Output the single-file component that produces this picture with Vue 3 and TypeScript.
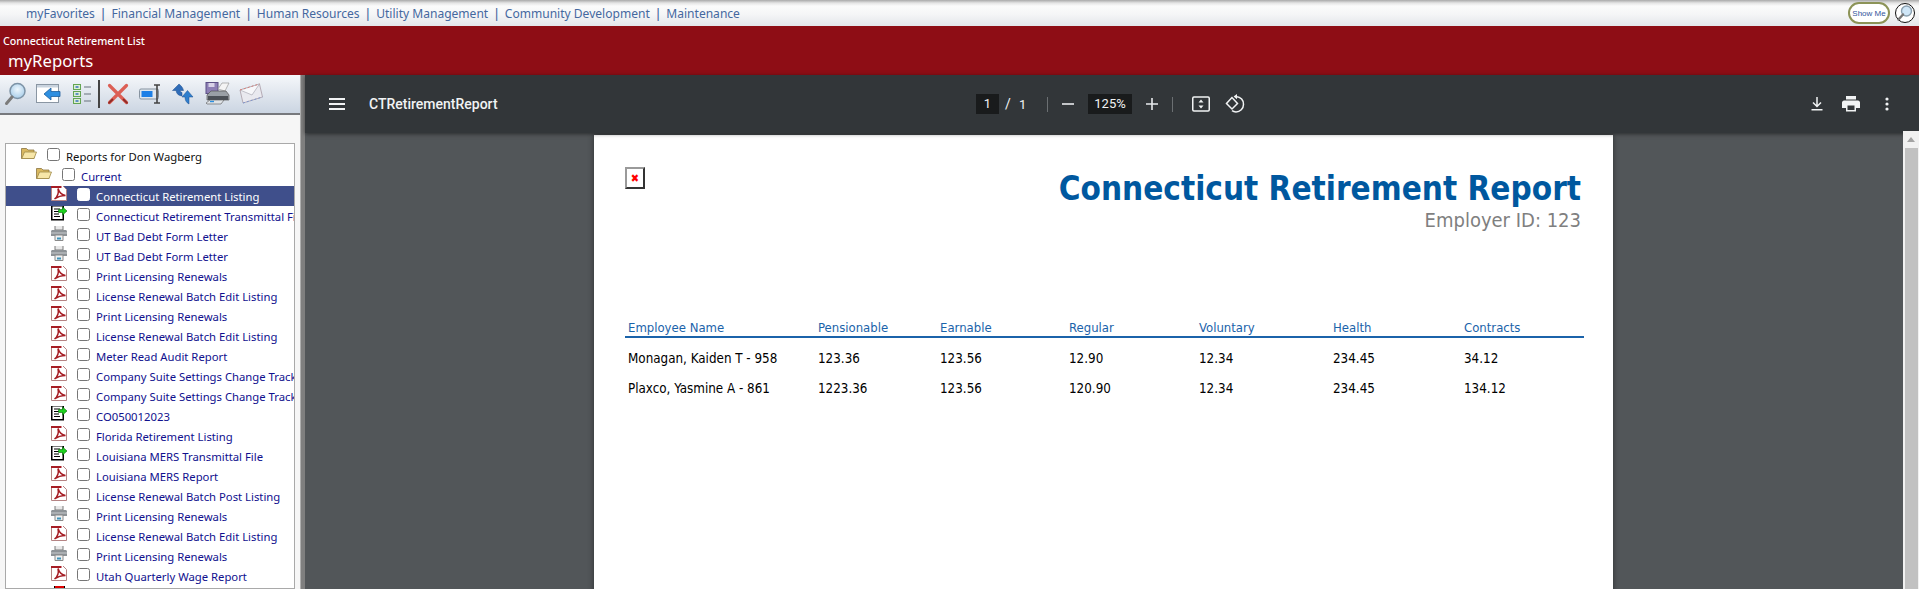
<script setup lang="ts">
type Kind = 'pdf' | 'file' | 'print'
interface Row { kind: Kind; label: string; active?: boolean }

const navItems: string[] = ['myFavorites', 'Financial Management', 'Human Resources', 'Utility Management', 'Community Development', 'Maintenance']

const rows: Row[] = [
  { kind: 'pdf', label: 'Connecticut Retirement Listing', active: true },
  { kind: 'file', label: 'Connecticut Retirement Transmittal File' },
  { kind: 'print', label: 'UT Bad Debt Form Letter' },
  { kind: 'print', label: 'UT Bad Debt Form Letter' },
  { kind: 'pdf', label: 'Print Licensing Renewals' },
  { kind: 'pdf', label: 'License Renewal Batch Edit Listing' },
  { kind: 'pdf', label: 'Print Licensing Renewals' },
  { kind: 'pdf', label: 'License Renewal Batch Edit Listing' },
  { kind: 'pdf', label: 'Meter Read Audit Report' },
  { kind: 'pdf', label: 'Company Suite Settings Change Tracking' },
  { kind: 'pdf', label: 'Company Suite Settings Change Tracking' },
  { kind: 'file', label: 'CO050012023' },
  { kind: 'pdf', label: 'Florida Retirement Listing' },
  { kind: 'file', label: 'Louisiana MERS Transmittal File' },
  { kind: 'pdf', label: 'Louisiana MERS Report' },
  { kind: 'pdf', label: 'License Renewal Batch Post Listing' },
  { kind: 'print', label: 'Print Licensing Renewals' },
  { kind: 'pdf', label: 'License Renewal Batch Edit Listing' },
  { kind: 'print', label: 'Print Licensing Renewals' },
  { kind: 'pdf', label: 'Utah Quarterly Wage Report' },
]

const headers: string[] = ['Employee Name', 'Pensionable', 'Earnable', 'Regular', 'Voluntary', 'Health', 'Contracts']
const records: string[][] = [
  ['Monagan, Kaiden T - 958', '123.36', '123.56', '12.90', '12.34', '234.45', '34.12'],
  ['Plaxco, Yasmine A - 861', '1223.36', '123.56', '120.90', '12.34', '234.45', '134.12'],
]
</script>

<template>
  <div class="app">
    <nav class="topnav">
      <template v-for="(item, i) in navItems" :key="item">
        <span v-if="i > 0" class="sep">|</span>
        <a class="navlink">{{ item }}</a>
      </template>
      <span class="showme">Show Me</span>
      <span class="round-search">
        <svg width="18" height="18" viewBox="0 0 18 18">
          <circle cx="10.5" cy="7" r="5" fill="#cfe6f7" stroke="#8aa0b0" stroke-width="1.4" />
          <path d="M7 10.5L2.5 15.5" stroke="#777" stroke-width="2.4" stroke-linecap="round" />
        </svg>
      </span>
    </nav>

    <header class="banner">
      <div class="banner-sub">Connecticut Retirement List</div>
      <div class="banner-title">myReports</div>
    </header>

    <main class="main">
      <aside class="left">
        <div class="tools">
          <svg class="t" width="22" height="24" viewBox="0 0 22 24">
            <defs>
              <radialGradient id="lens" cx="0.5" cy="0.4" r="0.7"><stop offset="0" stop-color="#eef7fd" /><stop offset="1" stop-color="#9cc6e6" /></radialGradient>
            </defs>
            <circle cx="13.5" cy="9" r="7.5" fill="url(#lens)" stroke="#7d93a6" stroke-width="1.5" />
            <path d="M8 15L2.5 21.5" stroke="#7b7b7b" stroke-width="3" stroke-linecap="round" />
          </svg>
          <svg class="t t2" width="25" height="22" viewBox="0 0 25 22">
            <rect x="0.5" y="1.5" width="22" height="18" fill="#fff" stroke="#8a96a3" />
            <rect x="1" y="2" width="21" height="2.5" fill="#c9d3de" />
            <path d="M8 11L15 5V8.5H24V13.5H15V17Z" fill="#2f8fe0" stroke="#1c5e9e" stroke-width="0.8" />
          </svg>
          <svg class="t t3" width="19" height="22" viewBox="0 0 19 22">
            <g fill="#dcefd4" stroke="#63a552">
              <rect x="0.5" y="1.5" width="7" height="5" /><rect x="0.5" y="8.5" width="7" height="5" /><rect x="0.5" y="15.5" width="7" height="5" />
            </g>
            <g fill="#5f8fc5"><rect x="2.5" y="3" width="3" height="2" /><rect x="2.5" y="10" width="3" height="2" /><rect x="2.5" y="17" width="3" height="2" /></g>
            <path d="M11 4H18M11 11H18M11 18H18" stroke="#68727c" stroke-width="1.2" />
          </svg>
          <span class="tsep"></span>
          <svg class="t t4" width="22" height="22" viewBox="0 0 22 22">
            <path d="M2.5 2.5L19.5 19.5M19.5 2.5L2.5 19.5" stroke="#dc5f55" stroke-width="3.2" stroke-linecap="round" />
            <path d="M2 19.8L5.5 16.5M20 19.8L16.5 16.5" stroke="#8e2a25" stroke-width="1.8" stroke-linecap="round" />
          </svg>
          <svg class="t t5" width="23" height="22" viewBox="0 0 23 22">
            <rect x="0.5" y="6" width="19" height="10" rx="1.5" fill="#dfe6ee" stroke="#8693a0" />
            <rect x="2.5" y="8" width="11" height="6" fill="#1d7fe6" />
            <path d="M15 2H21M18 2V20M15 20H21" stroke="#444" stroke-width="1.6" fill="none" />
          </svg>
          <svg class="t t6" width="23" height="22" viewBox="0 0 23 22">
            <path d="M7 1L0.5 7.5H4C4.5 11 6.5 12.5 10 13V9.5C8.5 9 8 8 8 7.5H11.5C11 5 9.5 3 7 1Z" fill="#2f6cb8" stroke="#1f4f8c" stroke-width="0.5" />
            <path d="M17 21V14H21L15.5 7.5L10 14H13C13 17 14 19.5 17 21Z" fill="#2f7fce" stroke="#1f4f8c" stroke-width="0.5" />
          </svg>
          <svg class="t t7" width="25" height="24" viewBox="0 0 25 24">
            <rect x="1" y="0.5" width="12" height="11" fill="#8d7fb5" stroke="#5b4f85" />
            <rect x="3.5" y="1" width="6" height="4" fill="#d8d2e8" />
            <path d="M13 7L17 1H24L20 9Z" fill="#f4f4f4" stroke="#999" stroke-width="0.7" />
            <path d="M2 13L6 9H21L24 13V18H2Z" fill="#9aa0a6" stroke="#555" stroke-width="0.7" />
            <path d="M3 14H23V18H3Z" fill="#4c5157" />
            <path d="M1 21L5 18H19L16 22H2Z" fill="#dfe3e7" stroke="#555" stroke-width="0.6" />
            <path d="M5 19.5H9" stroke="#2b8fe0" stroke-width="1.4" />
          </svg>
          <svg class="t t8" width="24" height="22" viewBox="0 0 24 22">
            <path d="M1 7L20.5 1L23.5 14L4 20Z" fill="#e9e9ef" stroke="#b5abb4" stroke-width="1" />
            <path d="M1 7L13 12L20.5 1Z" fill="#f7f7fa" stroke="#b4b4bc" stroke-width="0.8" />
            <path d="M1 7L20.5 1" stroke="#d6807a" stroke-width="1" stroke-dasharray="2 2" />
            <path d="M4 20L23.5 14" stroke="#7d95cc" stroke-width="1" stroke-dasharray="2 2" />
          </svg>
        </div>
        <div class="tree-wrap">
          <div class="tree">
            <div class="row lvl0">
              <svg class="ico" width="16" height="14" viewBox="0 0 16 14"><use href="#folder" /></svg>
              <span class="cb"></span>
              <span class="lbl root">Reports for Don Wagberg</span>
            </div>
            <div class="row lvl1">
              <svg class="ico" width="16" height="14" viewBox="0 0 16 14"><use href="#folder" /></svg>
              <span class="cb"></span>
              <span class="lbl">Current</span>
            </div>
            <div v-for="(r, i) in rows" :key="i" class="row lvl2" :class="{ active: r.active }">
              <svg class="ico" width="16" height="16" viewBox="0 0 16 16"><use :href="'#' + r.kind" /></svg>
              <span class="cb"></span>
              <span class="lbl">{{ r.label }}</span>
            </div>
            <div class="row lvl2 partial">
              <span class="redtop"></span>
              <span class="cb"></span>
            </div>
          </div>
        </div>
      </aside>
      <div class="splitter"></div>

      <section class="viewer">
        <div class="pdfbar">
          <div class="pb-left">
            <svg width="16" height="12" viewBox="0 0 16 12"><path d="M0 1H16M0 6H16M0 11H16" stroke="#f1f3f4" stroke-width="2" /></svg>
            <span class="docname">CTRetirementReport</span>
          </div>
          <div class="pb-mid">
            <span class="pagebox">1</span>
            <span class="slash">/</span>
            <span class="pagecount">1</span>
            <span class="vsep vsep1"></span>
            <svg class="minus" width="12" height="12" viewBox="0 0 12 12"><path d="M0 6H12" stroke="#e8eaed" stroke-width="1.6" /></svg>
            <span class="zoombox">125%</span>
            <svg class="plus" width="12" height="12" viewBox="0 0 12 12"><path d="M0 6H12M6 0V12" stroke="#e8eaed" stroke-width="1.6" /></svg>
            <span class="vsep vsep2"></span>
            <svg class="fit" width="18" height="16" viewBox="0 0 18 16">
              <rect x="0.75" y="1" width="16.5" height="14" rx="1.2" fill="none" stroke="#f1f3f4" stroke-width="1.5" />
              <path d="M9 3.5L11.5 6.5H6.5ZM9 12.5L6.5 9.5H11.5Z" fill="#f1f3f4" />
            </svg>
            <svg class="rotate" width="20" height="20" viewBox="0 0 20 20">
              <path d="M7 3.5L1.5 9.5L7 15L12.5 9.5Z" fill="none" stroke="#f1f3f4" stroke-width="1.5" />
              <path d="M11 2.5C15.5 3 18.5 6 18.5 10.5C18.5 14.5 15 18 11 18C9.5 18 8 17.5 7 16.7" fill="none" stroke="#f1f3f4" stroke-width="1.5" />
              <path d="M12 0L8.6 2.6L12 5.2Z" fill="#f1f3f4" />
            </svg>
          </div>
          <div class="pb-right">
            <svg width="14" height="14" viewBox="0 0 14 14"><path d="M7 0V9M3 5.5L7 9.5L11 5.5M1.5 12.8H12.5" fill="none" stroke="#f1f3f4" stroke-width="1.5" /></svg>
            <svg class="pr" width="18" height="16" viewBox="0 0 18 16"><path d="M4 0H14V3.5H4ZM2 4.5H16C17 4.5 18 5.5 18 6.5V12H14V15.5H4V12H0V6.5C0 5.5 1 4.5 2 4.5ZM5.5 9.5V14H12.5V9.5Z" fill="#f1f3f4" fill-rule="evenodd" /></svg>
            <svg class="dots" width="4" height="14" viewBox="0 0 4 14"><circle cx="2" cy="2" r="1.6" fill="#f1f3f4" /><circle cx="2" cy="7" r="1.6" fill="#f1f3f4" /><circle cx="2" cy="12" r="1.6" fill="#f1f3f4" /></svg>
          </div>
        </div>
        <div class="pdfbody">
          <div class="stage">
            <article class="page">
              <div class="broken"><span class="xmark">✖</span></div>
              <div class="titles">
                <h1>Connecticut Retirement Report</h1>
                <div class="employer">Employer ID: 123</div>
              </div>
              <div class="table">
                <div class="thead">
                  <span v-for="h in headers" :key="h">{{ h }}</span>
                </div>
                <div v-for="rec in records" :key="rec[0]" class="trow">
                  <span v-for="(c, i) in rec" :key="i">{{ c }}</span>
                </div>
              </div>
            </article>
          </div>
          <div class="scroll">
            <div class="arrow"></div>
            <div class="thumb"></div>
          </div>
        </div>
      </section>
    </main>

    <svg width="0" height="0" class="defs">
      <defs>
        <symbol id="folder" viewBox="0 0 16 14">
          <path d="M0.5 12.5V2.5H5.5L7 4H13V12.5Z" fill="#d9b860" stroke="#8a7440" stroke-width="0.8" />
          <path d="M0.8 12.5L3.5 6H15.5L13 12.5Z" fill="#f7e6a8" stroke="#a08a48" stroke-width="0.8" />
        </symbol>
        <symbol id="pdf" viewBox="0 0 16 16">
          <path d="M0.5 0.5H11.5L15.5 4.5V15.5H0.5Z" fill="#fff" stroke="#b58484" />
          <path d="M0 0H10.5V3H0Z" fill="#a61c24" />
          <path d="M3.5 14C6 12 8 8 7 3.5C8.5 8 10.5 10 14.5 10.5C10.5 10.5 7 11.5 3.5 14Z" fill="none" stroke="#a61c24" stroke-width="1.5" />
        </symbol>
        <symbol id="file" viewBox="0 0 16 16">
          <rect x="0.75" y="0.75" width="11.5" height="14" fill="#fff" stroke="#000" stroke-width="1.5" />
          <path d="M3 4H9M3 6.5H8M3 9H8M3 11.5H9" stroke="#000" stroke-width="1" />
          <path d="M7.5 4.5H11.5V2L16 6L11.5 10V7.5H7.5Z" fill="#1fd11f" stroke="#0a6a0a" stroke-width="0.6" />
        </symbol>
        <symbol id="print" viewBox="0 0 16 16">
          <path d="M4 0.5H12V5H4Z" fill="#e8e8e8" stroke="#7a7a7a" />
          <path d="M1.5 5H14.5C15.3 5 16 5.7 16 6.5V11H0V6.5C0 5.7 0.7 5 1.5 5Z" fill="#8d9296" />
          <path d="M0 8H16" stroke="#c9cccf" />
          <path d="M4 10H12V15.5H4Z" fill="#f1f1f1" stroke="#8a8a8a" />
          <path d="M6 12.5H10V14.5H6Z" fill="#3f93b8" />
        </symbol>
      </defs>
    </svg>
  </div>
</template>

<style scoped>
.app { width: 1919px; height: 589px; overflow: hidden; display: flex; flex-direction: column; font-family: "Noto Sans", sans-serif; background: #fff; }
.defs { position: absolute; }

.topnav { height: 26px; flex: none; display: flex; align-items: center; padding-left: 26px; padding-right: 4px; box-sizing: border-box; font-size: 12.05px; color: #44689f;
  background: linear-gradient(#a9a9a9 0, #e4e4e4 3px, #fbfbfb 6px, #f5f6f7 14px, #e3e6ea 26px); }
.navlink { white-space: nowrap; }
.sep { margin: 0 4.7px; color: #44689f; font-size: 13px; font-weight: 500; }
.showme { margin-left: auto; margin-right: 0; width: 42px; height: 22px; box-sizing: border-box; border: 2px solid #8c9357; border-radius: 11px; background: #fff; display: flex; align-items: center; justify-content: center; font-family: "Liberation Sans", sans-serif; font-size: 8px; color: #33559c; white-space: nowrap; }
.round-search { margin-left: 5px; width: 20px; height: 20px; box-sizing: border-box; border: 1px solid #111; border-radius: 50%; background: #fff; display: flex; align-items: center; justify-content: center; }

.banner { height: 49px; flex: none; background: #8e0d15; color: #fff; box-sizing: border-box; padding: 8px 0 0 3px; }
.banner-sub { font-size: 10.7px; font-weight: 500; line-height: 15px; }
.banner-title { font-size: 16.7px; line-height: 24px; margin-left: 5px; }

.main { flex: 1; display: flex; min-height: 0; }
.left { width: 300px; flex: none; display: flex; flex-direction: column; background: #f6f6f6; }
.tools { height: 40px; flex: none; box-sizing: border-box; border-bottom: 2px solid #77797d; display: flex; align-items: center; padding-left: 4px; background: linear-gradient(#f5f7fa, #cbd5e2); }
.t { flex: none; }
.t2 { margin-left: 10px; }
.t3 { margin-left: 12px; }
.tsep { width: 1.5px; height: 28px; background: #444; margin-left: 6px; flex: none; }
.t4 { margin-left: 7px; }
.t5 { margin-left: 10px; }
.t6 { margin-left: 10px; }
.t7 { margin-left: 10px; }
.t8 { margin-left: 9px; }

.tree-wrap { flex: 1; min-height: 0; padding: 28px 5px 0 5px; overflow: hidden; }
.tree { border: 1px solid #a9a9a9; background: #fff; height: 100%; padding-top: 2px; box-sizing: border-box; overflow: hidden; }
.row { height: 20px; display: flex; align-items: center; position: relative; white-space: nowrap; overflow: hidden; font-size: 11.3px; color: #10108e; }
.lvl0 { padding-left: 15px; }
.lvl1 { padding-left: 30px; }
.lvl2 { padding-left: 45px; }
.ico { flex: none; margin-top: -6px; }
.cb { flex: none; width: 13px; height: 13px; box-sizing: border-box; border: 1px solid #767676; border-radius: 2.5px; background: #fff; margin: 0 6px 4px 10px; }
.lbl { white-space: nowrap; }
.root { color: #111; }
.lvl2.active { background: #3f4f8b; color: #fff; }
.lvl2.active .cb { border-color: #fff; }
.redtop { width: 11px; height: 16px; background: #d00; border: 1px solid #000; box-sizing: border-box; margin-left: 3px; margin-top: -6px; margin-right: 2px; }

.splitter { width: 5px; flex: none; background: linear-gradient(90deg, #c8c8c8, #7f7f7f 30%, #7f7f7f); }

.viewer { flex: 1; min-width: 0; display: flex; flex-direction: column; background: #525659; }
.pdfbar { height: 58px; flex: none; background: #323639; box-shadow: 0 1px 4px rgba(0,0,0,.5); position: relative; z-index: 2; display: grid; grid-template-columns: 671px auto 1fr; align-items: center; color: #f1f3f4; }
.pb-left { display: flex; align-items: center; padding-left: 24px; }
.docname { margin-left: 24px; font-family: Roboto, sans-serif; font-size: 14px; font-weight: 500; }
.pb-mid { display: flex; align-items: center; font-family: Roboto, sans-serif; font-size: 13px; }
.pagebox { width: 23px; height: 20px; background: #191b1c; text-align: center; line-height: 20px; }
.slash { margin-left: 6px; width: 5px; font-size: 14px; }
.pagecount { margin-left: 9px; width: 8px; }
.vsep { width: 1px; height: 15px; background: #6b6f72; }
.vsep1 { margin-left: 20px; }
.minus { margin-left: 14px; }
.zoombox { width: 44px; height: 20px; background: #191b1c; text-align: center; line-height: 20px; margin-left: 14px; }
.plus { margin-left: 14px; }
.vsep2 { margin-left: 14px; }
.fit { margin-left: 19px; }
.rotate { margin-left: 15px; }
.pb-right { display: flex; align-items: center; justify-content: flex-end; padding-right: 30px; }
.pr { margin-left: 18px; }
.dots { margin-left: 25px; }

.pdfbody { flex: 1; min-height: 0; display: flex; }
.stage { flex: 1; min-width: 0; overflow: hidden; padding: 2px 0 0 289px; }
.page { width: 1019px; height: 600px; background: #fff; box-shadow: 0 0 6px rgba(0,0,0,.45); box-sizing: border-box; padding: 34px 32px 0 31px; position: relative; font-family: "DejaVu Sans Condensed", "DejaVu Sans", sans-serif; font-stretch: condensed; }
.broken { position: absolute; left: 31px; top: 32px; width: 20px; height: 22px; box-sizing: border-box; border: 2px solid; border-color: #9a9a9a #333 #333 #9a9a9a; background: #fff; display: flex; align-items: center; justify-content: center; }
.xmark { color: #f00; font-size: 11px; line-height: 1; }
.titles { text-align: right; }
h1 { margin: 0; font-size: 33px; line-height: 40px; font-weight: 700; color: #00589f; white-space: nowrap; }
.employer { font-size: 20px; line-height: 22px; color: #7f7f7f; margin-top: 0; }
.table { margin-top: 88px; margin-right: -3px; font-size: 13px; }
.thead, .trow { display: grid; grid-template-columns: 190px 122px 129px 130px 134px 131px 1fr; padding-left: 3px; }
.thead { color: #1b63aa; border-bottom: 2px solid #1b63aa; line-height: 17px; height: 17px; }
.trow { color: #000; line-height: 17px; height: 30px; align-items: center; font-size: 13.3px; }
.thead + .trow { margin-top: 5px; }

.scroll { width: 16px; flex: none; background: #f1f1f1; position: relative; z-index: 3; margin-top: -2px; display: flex; flex-direction: column; align-items: center; }
.arrow { width: 0; height: 0; margin-top: 6px; border-left: 4px solid transparent; border-right: 4px solid transparent; border-bottom: 5px solid #a3a3a3; }
.thumb { width: 13px; flex: 1; margin-top: 6px; background: #c1c1c1; }
</style>
